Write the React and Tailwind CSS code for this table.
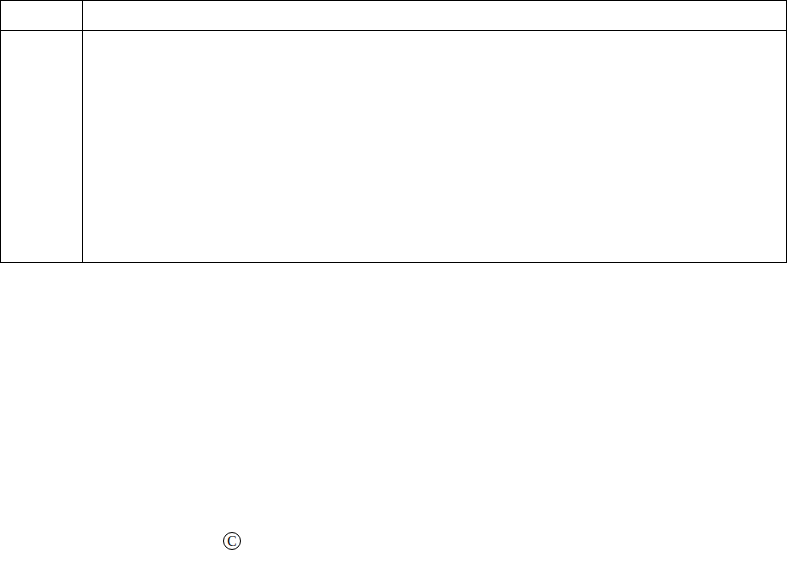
export default function App() {
  return (
    <div className="w-[788px] h-[563px] bg-white flex flex-col font-['Liberation_Serif',serif]">
      <div className="w-[787px] h-[263px] border border-black flex flex-col">
        <div className="h-[30px] flex border-b border-black">
          <div className="w-[82px] border-r border-black"></div>
          <div className="flex-1"></div>
        </div>
        <div className="flex-1 flex">
          <div className="w-[82px] border-r border-black"></div>
          <div className="flex-1"></div>
        </div>
      </div>
      <div className="mt-[269px] pl-[223px] flex">
        <span className="w-[18px] h-[18px] rounded-full border border-black flex items-center justify-center font-['Liberation_Serif',serif] text-[14px] leading-none text-black pt-[1px]">C</span>
      </div>
    </div>
  );
}
